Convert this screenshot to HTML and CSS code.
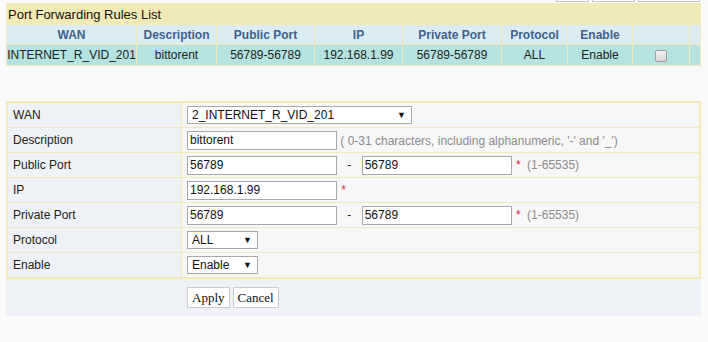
FILE: index.html
```html
<!DOCTYPE html>
<html lang="en">
<head>
    <meta charset="UTF-8">
    <title>Port Forwarding</title>
    <link rel="stylesheet" href="styles.css">
</head>
<body>
    <div class="page">
        <div class="toolbar">
            <button class="tool-btn tool-sm"></button>
            <button class="tool-btn tool-md"></button>
            <button class="tool-btn tool-lg"></button>
        </div>

        <table class="rules">
            <colgroup>
                <col class="c-wan">
                <col class="c-desc">
                <col class="c-pub">
                <col class="c-ip">
                <col class="c-priv">
                <col class="c-proto">
                <col class="c-enable">
                <col class="c-check">
                <col class="c-last">
            </colgroup>
            <tr>
                <td class="rules-title" colspan="9">Port Forwarding Rules List</td>
            </tr>
            <tr class="rules-head">
                <th>WAN</th>
                <th>Description</th>
                <th>Public Port</th>
                <th>IP</th>
                <th>Private Port</th>
                <th>Protocol</th>
                <th>Enable</th>
                <th></th>
                <th></th>
            </tr>
            <tr class="rules-row">
                <td>INTERNET_R_VID_201</td>
                <td>bittorent</td>
                <td>56789-56789</td>
                <td>192.168.1.99</td>
                <td>56789-56789</td>
                <td>ALL</td>
                <td>Enable</td>
                <td><input type="checkbox" class="row-check"></td>
                <td></td>
            </tr>
        </table>

        <div class="edit-box">
            <table class="edit-form">
                <tr>
                    <td class="label">WAN</td>
                    <td class="value">
                        <span class="select-wrap">
                            <select class="sel sel-wan"><option>2_INTERNET_R_VID_201</option></select>
                        </span>
                    </td>
                </tr>
                <tr>
                    <td class="label">Description</td>
                    <td class="value">
                        <input type="text" class="txt" value="bittorent">
                        <span class="hint">( 0-31 characters, including alphanumeric, '-' and '_')</span>
                    </td>
                </tr>
                <tr>
                    <td class="label">Public Port</td>
                    <td class="value">
                        <input type="text" class="txt" value="56789">
                        <span class="dash">-</span>
                        <input type="text" class="txt" value="56789">
                        <span class="req">*</span>
                        <span class="hint range">(1-65535)</span>
                    </td>
                </tr>
                <tr>
                    <td class="label">IP</td>
                    <td class="value">
                        <input type="text" class="txt" value="192.168.1.99">
                        <span class="req">*</span>
                    </td>
                </tr>
                <tr>
                    <td class="label">Private Port</td>
                    <td class="value">
                        <input type="text" class="txt" value="56789">
                        <span class="dash">-</span>
                        <input type="text" class="txt" value="56789">
                        <span class="req">*</span>
                        <span class="hint range">(1-65535)</span>
                    </td>
                </tr>
                <tr>
                    <td class="label">Protocol</td>
                    <td class="value">
                        <span class="select-wrap">
                            <select class="sel sel-small"><option>ALL</option></select>
                        </span>
                    </td>
                </tr>
                <tr>
                    <td class="label">Enable</td>
                    <td class="value">
                        <span class="select-wrap">
                            <select class="sel sel-small"><option>Enable</option></select>
                        </span>
                    </td>
                </tr>
            </table>
            <div class="edit-actions">
                <button class="act-btn">Apply</button>
                <button class="act-btn">Cancel</button>
            </div>
        </div>
    </div>
</body>
</html>
```

FILE: styles.css
```css
body, html {
    margin: 0;
    padding: 0;
    background-color: #fafafa;
    font-family: 'Liberation Sans', Arial, sans-serif;
    font-size: 12px;
    color: #222;
}
.page {
    width: 695px;
    margin-left: 6px;
}

/* cut-off buttons of the bar above */
.toolbar {
    height: 2px;
    overflow: hidden;
    display: flex;
    justify-content: flex-end;
    align-items: flex-end;
    gap: 3px;
    padding-right: 1px;
}
.tool-btn {
    height: 20px;
    border: 1px solid #c4c4c4;
    background-color: #fff;
    padding: 0;
}
.tool-sm { width: 33px; }
.tool-md { width: 43px; }
.tool-lg { width: 62px; }

/* rules list */
.rules {
    width: 695px;
    margin-top: 1px;
    table-layout: fixed;
    border-collapse: separate;
    border-spacing: 1px;
    background-color: #f1e9b6;
}
.c-wan { width: 129px; }
.c-desc { width: 79px; }
.c-pub { width: 97px; }
.c-ip { width: 87px; }
.c-priv { width: 98px; }
.c-proto { width: 65px; }
.c-enable { width: 64px; }
.c-check { width: 56px; }
.c-last { width: 10px; }
.rules td, .rules th {
    padding: 0;
    text-align: center;
    white-space: nowrap;
    overflow: hidden;
}
.rules .rules-title {
    height: 20px;
    text-align: left;
    padding-left: 1px;
    font-size: 13px;
    color: #111;
    background-color: #f1e9b6;
}
.rules-head th {
    height: 19px;
    background-color: #dcecf3;
    color: #40618f;
    font-weight: bold;
}
.rules-row td {
    height: 20px;
    background-color: #b5e3e1;
    color: #222;
}
.row-check {
    appearance: none;
    width: 12px;
    height: 12px;
    margin: 0;
    vertical-align: middle;
    border: 1px solid #9a9a9a;
    border-radius: 2px;
    background: linear-gradient(#f2f2f2, #d6d6d6);
}

/* edit form */
.edit-box {
    margin-top: 35px;
    background-color: #eef1f6;
    padding-bottom: 8px;
}
.edit-form {
    width: 695px;
    table-layout: fixed;
    border-collapse: collapse;
    border: 2px solid #f1e9b6;
}
.edit-form td {
    height: 24px;
    padding: 0 5px;
    border-bottom: 1px solid #f1e9b6;
    white-space: nowrap;
}
.edit-form .label {
    width: 163px;
    background-color: #eef1f6;
    border-right: 1px solid #f1e9b6;
}
.edit-form .value {
    background-color: #f7f7f7;
}
.txt {
    box-sizing: border-box;
    width: 150px;
    height: 19px;
    margin: 0;
    padding: 0 2px;
    border: 1px solid #a9a9a9;
    background-color: #fff;
    font-family: 'Liberation Sans', Arial, sans-serif;
    font-size: 12px;
    color: #111;
    vertical-align: middle;
}
.dash {
    display: inline-block;
    width: 18px;
    text-align: center;
    vertical-align: middle;
}
.req {
    color: #e8174a;
    margin-left: 1px;
    vertical-align: middle;
}
.hint {
    color: #8c8c8c;
    vertical-align: middle;
}
.range {
    margin-left: 3px;
}
.select-wrap {
    position: relative;
    display: inline-block;
    vertical-align: middle;
}
.select-wrap::after {
    content: "\25BC";
    position: absolute;
    right: 6px;
    top: 4px;
    font-size: 9px;
    color: #111;
    pointer-events: none;
}
.sel {
    appearance: none;
    box-sizing: border-box;
    height: 18px;
    margin: 0;
    padding: 0 0 0 4px;
    border: 1px solid #a9a9a9;
    border-radius: 0;
    background-color: #fff;
    font-family: 'Liberation Sans', Arial, sans-serif;
    font-size: 12px;
    color: #111;
    display: block;
}
.sel-wan { width: 225px; }
.sel-small { width: 71px; }

.edit-actions {
    display: flex;
    gap: 3px;
    padding: 8px 0 0 181px;
}
.act-btn {
    height: 21px;
    padding: 0 4px;
    border: 1px solid #cccccc;
    background-color: #fff;
    font-family: 'Liberation Serif', 'Times New Roman', serif;
    font-size: 13px;
    color: #111;
}
```
